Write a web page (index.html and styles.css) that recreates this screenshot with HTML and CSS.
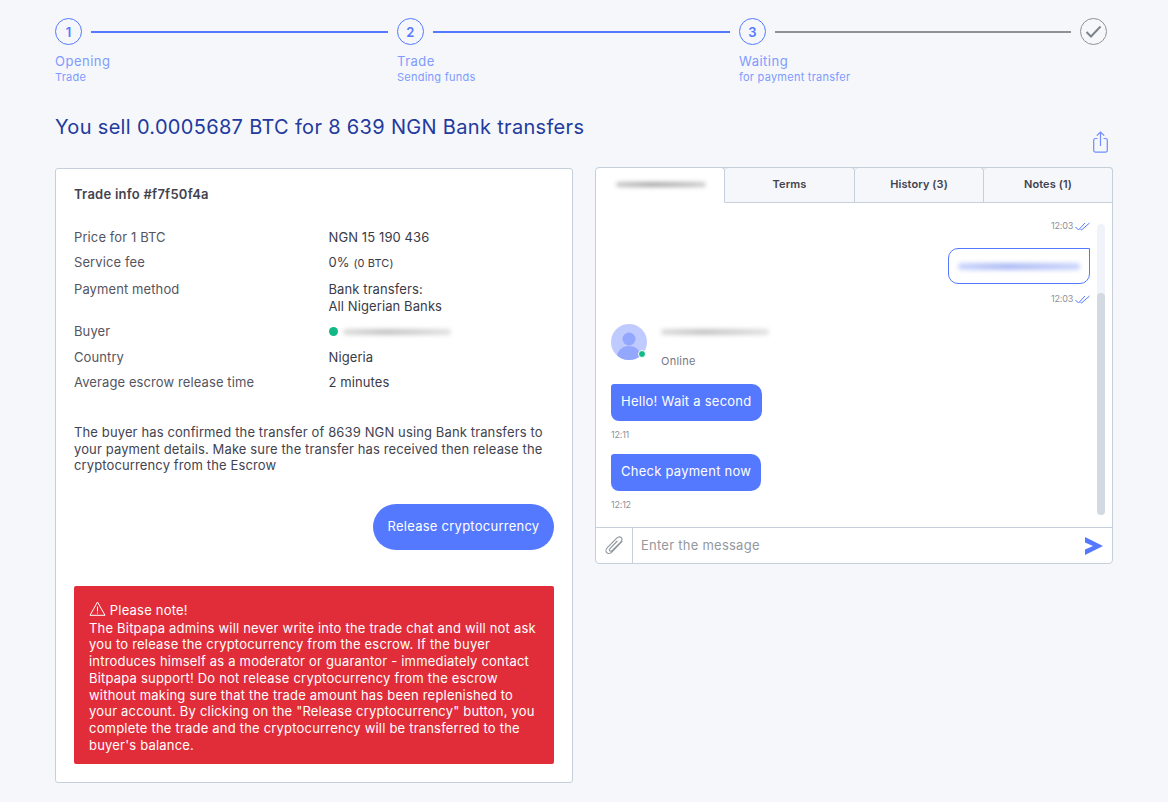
FILE: index.html
```html
<!DOCTYPE html>
<html>
<head>
  <title>Trade</title>
  <link rel="stylesheet" href="styles.css">
</head>

<body>
  <main>
    <div class="steps">
      <div class="step">
        <div class="step-head"><span class="circle">1</span><span class="bar"></span></div>
        <div class="step-title">Opening</div>
        <div class="step-sub">Trade</div>
      </div>
      <div class="step">
        <div class="step-head"><span class="circle">2</span><span class="bar"></span></div>
        <div class="step-title">Trade</div>
        <div class="step-sub">Sending funds</div>
      </div>
      <div class="step step-last">
        <div class="step-head"><span class="circle">3</span><span class="bar bar-grey"></span>
          <span class="circle circle-done">
            <svg width="17" height="13" viewBox="0 0 17 13"><path d="M1.500 7l4.500 4.500L15.500 1.500" fill="none" stroke="#7d858c" stroke-width="2"/></svg>
          </span>
        </div>
        <div class="step-title">Waiting</div>
        <div class="step-sub">for payment transfer</div>
      </div>
    </div>

    <div class="title-row">
      <h1>You sell 0.0005687 BTC for 8 639 NGN Bank transfers</h1>
    </div>
    <div class="share-row">
      <svg width="15" height="22" viewBox="0 0 15 22" fill="none" stroke="#6f8dff" stroke-width="1.200">
        <path d="M4.500 7.500H2.500A1.800 1.800 0 0 0 .700 9.300V19.400A1.800 1.800 0 0 0 2.500 21.200H12.500A1.800 1.800 0 0 0 14.300 19.400V9.300A1.800 1.800 0 0 0 12.500 7.500H10.500"/>
        <path d="M7.500 15V1M3.800 4.700L7.500 1l3.700 3.700"/>
      </svg>
    </div>

    <div class="columns">
      <section class="card info">
        <h2>Trade info #f7f50f4a</h2>
        <div class="rows">
          <span>Price for 1 BTC</span><span class="val">NGN 15 190 436</span>
          <span>Service fee</span><span class="val">0% <small>(0 BTC)</small></span>
          <span>Payment method</span><span class="val">Bank transfers:<br>All Nigerian Banks</span>
          <span>Buyer</span><span class="val buyer"><i class="dot"></i><i class="smudge smudge-buyer"></i></span>
          <span>Country</span><span class="val">Nigeria</span>
          <span>Average escrow release time</span><span class="val">2 minutes</span>
        </div>
        <p class="desc">The buyer has confirmed the transfer of 8639 NGN using Bank transfers to your payment details. Make sure the transfer has received then release the cryptocurrency from the Escrow</p>
        <div class="actions"><button type="button">Release cryptocurrency</button></div>
        <div class="note">
          <div class="note-head">
            <svg width="17" height="15" viewBox="0 0 17 15" fill="none" stroke="#fff" stroke-width="1"><path d="M8.500 1L16 14.300H1z"/><path d="M8.500 5.500v5M8.500 11.500v1.200"/></svg>
            Please note!
          </div>
          The Bitpapa admins will never write into the trade chat and will not ask you to release the cryptocurrency from the escrow. If the buyer introduces himself as a moderator or guarantor - immediately contact Bitpapa support! Do not release cryptocurrency from the escrow without making sure that the trade amount has been replenished to your account. By clicking on the "Release cryptocurrency" button, you complete the trade and the cryptocurrency will be transferred to the buyer's balance.
        </div>
      </section>

      <section class="chat">
        <div class="tabs">
          <div class="tab active"><i class="smudge smudge-tab"></i></div>
          <div class="tab">Terms</div>
          <div class="tab">History (3)</div>
          <div class="tab">Notes (1)</div>
        </div>
        <div class="chat-body">
          <div class="messages">
            <div class="time right">12:03 <svg class="ticks" width="15" height="9" viewBox="0 0 15 9" fill="none" stroke="#5479ff"><path d="M0.500 5l3 3L10 1M5.500 7l1 1L14.500 1"/></svg></div>
            <div class="bubble-out"><i class="smudge smudge-out"></i></div>
            <div class="time right time-out">12:03 <svg class="ticks" width="15" height="9" viewBox="0 0 15 9" fill="none" stroke="#5479ff"><path d="M0.500 5l3 3L10 1M5.500 7l1 1L14.500 1"/></svg></div>
            <div class="author">
              <div class="avatar">
                <svg width="36" height="36" viewBox="0 0 36 36">
                  <defs><clipPath id="av"><circle cx="18" cy="18" r="18"/></clipPath></defs>
                  <circle cx="18" cy="18" r="18" fill="#bfcbff"/>
                  <g clip-path="url(#av)" fill="#93a7ff">
                    <circle cx="18" cy="15" r="6.500"/>
                    <ellipse cx="18" cy="33" rx="12" ry="11"/>
                  </g>
                </svg>
                <i class="online-dot"></i>
              </div>
              <div class="author-text">
                <i class="smudge smudge-name"></i>
                <div class="online">Online</div>
              </div>
            </div>
            <div class="bubble-in">Hello! Wait a second</div>
            <div class="time">12:11</div>
            <div class="bubble-in">Check payment now</div>
            <div class="time">12:12</div>
          </div>
          <div class="scroll"><div class="thumb"></div></div>
        </div>
        <div class="composer">
          <div class="attach">
            <svg width="20" height="20" viewBox="1 1 18 18" fill="none" stroke="#8f969c" stroke-width="1">
              <path d="M17.500 5.500L8 15.500c-1.500 1.500-3.500 1.500-4.500.500s-1-3 .500-4.500L12.500 3c1.500-1.500 3-1.500 4-.500s1 2.500-.500 4L8.500 14c-.800.800-1.700.800-2.200.300s-.500-1.400.300-2.200L13 5.500"/>
            </svg>
          </div>
          <div class="placeholder">Enter the message</div>
          <svg class="send" width="18" height="18" viewBox="0 0 18 18"><path d="M0 0L18 9L0 18V12.500L8 9L0 5.500z" fill="#5479ff"/></svg>
        </div>
      </section>
    </div>
  </main>
</body>
</html>
```

FILE: styles.css
```css
body {
  font-family: Inter, "Open Sans", sans-serif;
  margin: 0;
  background-color: #F5F7FB;
  color: #43434F;
  font-size: 13px;
  letter-spacing: 0.25px;
  overflow: hidden;
}

main {
  width: 1058px;
  margin-left: 55px;
  padding-top: 18px;
}

/* steps */
.steps {
  display: flex;
}

.step {
  width: 342px;
  color: #7F9BFF;
}

.step-last {
  width: 368px;
}

.step-head {
  display: flex;
  align-items: center;
  gap: 9px;
  height: 27px;
  margin-bottom: 8px;
}

.circle {
  box-sizing: border-box;
  width: 27px;
  height: 27px;
  flex: none;
  border: 1px solid #5479FF;
  border-radius: 50%;
  display: flex;
  align-items: center;
  justify-content: center;
  color: #5479FF;
  font-weight: 600;
  font-size: 13px;
}

.circle-done {
  border-color: #8C9297;
}

.bar {
  width: 297px;
  height: 2px;
  background: #5479FF;
}

.bar-grey {
  background: #8C9297;
}

.step-title {
  line-height: 17px;
  letter-spacing: 0.5px;
}

.step-sub {
  font-size: 11px;
  line-height: 15px;
}

/* title */
.title-row {
  margin-top: 28px;
}

h1 {
  margin: 0;
  font-size: 20px;
  line-height: 28px;
  font-weight: 400;
  color: #233A9E;
  letter-spacing: 0.32px;
}

.share-row {
  display: flex;
  justify-content: flex-end;
  padding-right: 5px;
  margin-top: -10px;
  height: 36px;
}

.columns {
  display: flex;
  justify-content: space-between;
  align-items: flex-start;
}

/* left card */
.card {
  box-sizing: border-box;
  background: #fff;
  border: 1px solid #C5D0DA;
  border-radius: 3px;
}

.info {
  width: 518px;
  height: 615px;
  margin-top: 1px;
  padding: 17px 18px;
}

h2 {
  margin: 0 0 25.500px;
  font-size: 13px;
  line-height: 17px;
  font-weight: 600;
}

.rows {
  display: grid;
  grid-template-columns: 254.500px 1fr;
  row-gap: 8.500px;
  line-height: 17px;
  color: #55555F;
  letter-spacing: 0.1px;
}

.val {
  color: #3B3B47;
  font-weight: 400;
}

.val small {
  font-size: 11px;
}

.buyer {
  display: flex;
  align-items: center;
}

.dot {
  width: 9px;
  height: 9px;
  border-radius: 50%;
  background: #12B886;
  margin-right: 5px;
}

.smudge {
  display: block;
  height: 6px;
  border-radius: 3px;
  background: linear-gradient(90deg, #dcdcdc, #c4c4c4 40%, #d2d2d2 70%, #e2e2e2);
  filter: blur(2px);
}

.smudge-buyer {
  width: 108px;
}

.desc {
  margin: 33px 0 0;
  line-height: 16.500px;
  letter-spacing: 0.125px;
}

.actions {
  display: flex;
  justify-content: flex-end;
  margin-top: 30.500px;
}

button {
  font-family: Inter, sans-serif;
  font-size: 13px;
  letter-spacing: 0.250px;
  width: 181px;
  height: 46px;
  padding: 0 0 3px;
  border: none;
  border-radius: 23px;
  background-color: #5479FF;
  color: #fff;
}

.note {
  margin-top: 36px;
  padding: 15px 15px 11px;
  background: #E12D3A;
  border-radius: 2px;
  color: #fff;
  line-height: 16.700px;
  letter-spacing: 0.2px;
}

.note-head {
  margin-bottom: 1px;
}

.note-head svg {
  vertical-align: -1px;
}

/* chat */
.chat {
  box-sizing: border-box;
  width: 518px;
  background: #fff;
  border: 1px solid #C5D0DA;
  border-radius: 4px;
}

.tabs {
  display: grid;
  grid-template-columns: 129px 130px 129px 1fr;
  height: 36px;
  margin: -1px -1px 0 0;
}

.tab {
  box-sizing: border-box;
  background: #F5F7FB;
  border: 1px solid #C5D0DA;
  border-left-width: 0;
  border-radius: 4px 4px 0 0;
  padding-bottom: 2px;
  display: flex;
  align-items: center;
  justify-content: center;
  font-size: 11px;
  font-weight: 600;
  letter-spacing: 0.1px;
  color: #43434F;
}

.tab.active {
  background: #fff;
  border-bottom-color: #fff;
}

.smudge-tab {
  width: 90px;
  height: 5px;
  margin-left: 2px;
  background: linear-gradient(90deg, #c8c8c8, #a8a8a8 40%, #bcbcbc 80%, #d0d0d0);
}

.chat-body {
  display: flex;
  height: 324px;
  padding-left: 15px;
}

.messages {
  flex: 1;
  padding-top: 17px;
}

.scroll {
  width: 8px;
  height: 291px;
  margin: 21px 7px 0;
  border-radius: 4px;
  background: #F0F3F8;
  display: flex;
  flex-direction: column;
  justify-content: flex-end;
}

.thumb {
  height: 222px;
  border-radius: 4px;
  background: #D2D9E0;
}

.time {
  font-size: 9px;
  line-height: 12px;
  color: #8C9297;
  letter-spacing: -0.2px;
}

.time.right {
  display: flex;
  justify-content: flex-end;
  align-items: center;
  gap: 2px;
}

.time-out {
  margin-top: 9px;
}

.ticks {
  flex: none;
}

.bubble-out {
  box-sizing: border-box;
  width: 142px;
  height: 36px;
  margin: 16px 0 0 auto;
  border: 1px solid #5479FF;
  border-radius: 10px 0 10px 10px;
  display: flex;
  align-items: center;
  justify-content: center;
}

.smudge-out {
  width: 122px;
  height: 7px;
  background: linear-gradient(90deg, #ccd6fb, #aebcf5 40%, #bdc9f8 70%, #ccd6fb);
}

.author {
  display: flex;
  gap: 14px;
  margin-top: 19px;
  margin-bottom: 16px;
}

.avatar {
  position: relative;
  width: 36px;
  height: 36px;
}

.avatar svg {
  display: block;
}

.online-dot {
  position: absolute;
  right: 1px;
  bottom: 2px;
  width: 6px;
  height: 6px;
  border-radius: 50%;
  background: #12B886;
  border: 1px solid #fff;
  box-sizing: content-box;
}

.author-text {
  padding-top: 5px;
}

.smudge-name {
  width: 108px;
  margin-bottom: 19px;
}

.online {
  font-size: 11px;
  line-height: 14px;
  color: #77777F;
}

.bubble-in {
  display: table;
  box-sizing: border-box;
  height: 37px;
  padding: 0 10px;
  line-height: 35px;
  border-radius: 3px 10px 10px 8px;
  background: #5479FF;
  color: #fff;
}

.bubble-in + .time {
  margin: 8px 0 13px;
}

.composer {
  display: flex;
  align-items: center;
  height: 35px;
  border-top: 1px solid #C5D0DA;
}

.attach {
  box-sizing: border-box;
  width: 37px;
  height: 100%;
  border-right: 1px solid #C5D0DA;
  display: flex;
  align-items: center;
  justify-content: center;
}

.placeholder {
  flex: 1;
  padding: 0 0 2px 8px;
  color: #94989E;
}

.send {
  margin-right: 9px;
}
```
